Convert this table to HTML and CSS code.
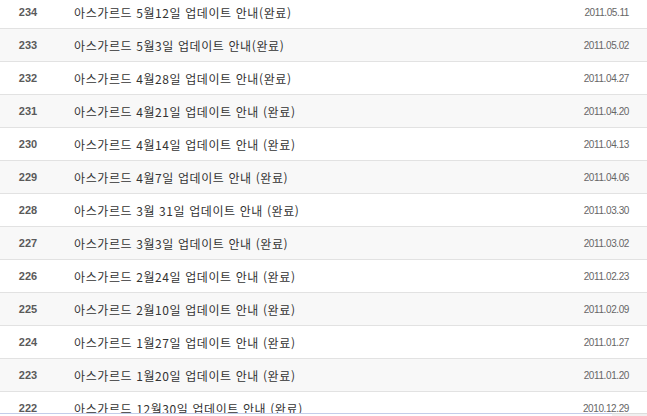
FILE: index.html
```html
<!DOCTYPE html>
<html lang="ko">
<head>
<meta charset="utf-8">
<link rel="stylesheet" href="styles.css">
</head>
<body>
<ul class="list">
  <li class="row"><span class="num">234</span><span class="title">아스가르드 5월12일 업데이트 안내(완료)</span><span class="date">2011.05.11</span></li>
  <li class="row"><span class="num">233</span><span class="title">아스가르드 5월3일 업데이트 안내(완료)</span><span class="date">2011.05.02</span></li>
  <li class="row"><span class="num">232</span><span class="title">아스가르드 4월28일 업데이트 안내(완료)</span><span class="date">2011.04.27</span></li>
  <li class="row"><span class="num">231</span><span class="title">아스가르드 4월21일 업데이트 안내 (완료)</span><span class="date">2011.04.20</span></li>
  <li class="row"><span class="num">230</span><span class="title">아스가르드 4월14일 업데이트 안내 (완료)</span><span class="date">2011.04.13</span></li>
  <li class="row"><span class="num">229</span><span class="title">아스가르드 4월7일 업데이트 안내 (완료)</span><span class="date">2011.04.06</span></li>
  <li class="row"><span class="num">228</span><span class="title">아스가르드 3월 31일 업데이트 안내 (완료)</span><span class="date">2011.03.30</span></li>
  <li class="row"><span class="num">227</span><span class="title">아스가르드 3월3일 업데이트 안내 (완료)</span><span class="date">2011.03.02</span></li>
  <li class="row"><span class="num">226</span><span class="title">아스가르드 2월24일 업데이트 안내 (완료)</span><span class="date">2011.02.23</span></li>
  <li class="row"><span class="num">225</span><span class="title">아스가르드 2월10일 업데이트 안내 (완료)</span><span class="date">2011.02.09</span></li>
  <li class="row"><span class="num">224</span><span class="title">아스가르드 1월27일 업데이트 안내 (완료)</span><span class="date">2011.01.27</span></li>
  <li class="row"><span class="num">223</span><span class="title">아스가르드 1월20일 업데이트 안내 (완료)</span><span class="date">2011.01.20</span></li>
  <li class="row"><span class="num">222</span><span class="title">아스가르드 12월30일 업데이트 안내 (완료)</span><span class="date">2010.12.29</span></li>
</ul>
<div class="bottom-edge"><div class="edge-box"></div></div>
</body>
</html>
```
FILE: styles.css
```css
html, body {
  margin: 0;
  padding: 0;
  background: #fff;
  overflow: hidden;
}
body {
  font-family: "Liberation Sans", "Noto Sans CJK KR", sans-serif;
}
.list {
  list-style: none;
  margin: -4px 0 0 0;
  padding: 0;
}
.row {
  display: flex;
  align-items: center;
  height: 32px;
  border-bottom: 1px solid #e2e2e2;
}
.row:nth-child(even) {
  background: #f8f8f8;
}
.num {
  width: 56px;
  text-align: center;
  font-family: "Liberation Sans", sans-serif;
  font-weight: bold;
  font-size: 11px;
  color: #5a5a5a;
}
.title {
  flex: 1;
  padding-left: 18px;
  font-family: "Noto Sans CJK KR", sans-serif;
  font-size: 12px;
  letter-spacing: 0.6px;
  color: #333;
  white-space: nowrap;
}
.date {
  padding-right: 18px;
  font-family: "Liberation Sans", sans-serif;
  font-size: 10px;
  letter-spacing: -0.4px;
  color: #666;
}
.bottom-edge {
  position: fixed;
  left: 0;
  right: 0;
  top: 413px;
  height: 3px;
  background: #f0f0f0;
  border-top: 1px solid #dcdcdc;
}
.edge-box {
  width: 612px;
  height: 2px;
  border-top: 1px solid #c3cdea;
  margin-top: -1px;
  background: #fff;
}
```
